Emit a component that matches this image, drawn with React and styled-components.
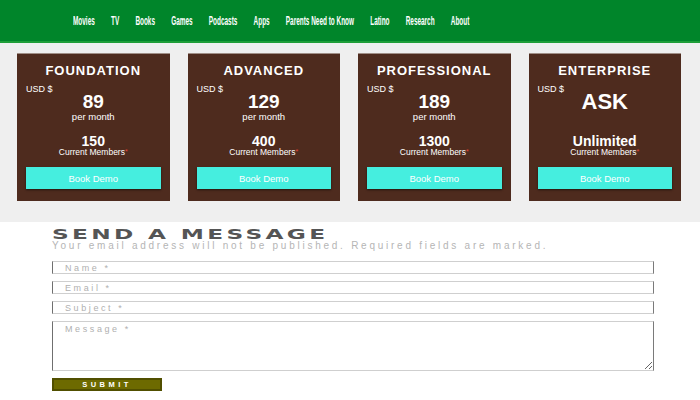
import React from "react";
import styled, { createGlobalStyle } from "styled-components";

const Global = createGlobalStyle`
  html, body { margin: 0; padding: 0; background: #ffffff; }
  body { font-family: "Liberation Sans", Arial, sans-serif; width: 700px; height: 400px; overflow: hidden; }
  #root { width: 700px; overflow: hidden; }
  * { box-sizing: border-box; }
`;

const Header = styled.header`
  height: 43px;
  background: #00852a;
  border-bottom: 2px solid #1e9e38;
  display: flex;
  align-items: center;
  padding-left: 73px;
  overflow: hidden;
`;

const NavList = styled.nav`
  display: flex;
  align-items: center;
  gap: 34px;
  transform: scaleX(0.476);
  transform-origin: left center;
  white-space: nowrap;
  flex-shrink: 0;
`;

const NavLink = styled.a`
  color: #ffffff;
  font-family: "Liberation Sans", Arial, sans-serif;
  font-size: 13.5px;
  font-weight: 700;
  text-decoration: none;
  line-height: 16px;
  margin-top: 1px;
`;

const Plans = styled.section`
  background: #efefef;
  padding: 10px 19px 21px 17px;
  display: grid;
  grid-template-columns: repeat(4, 1fr);
  gap: 18px;
`;

const Card = styled.div`
  background: #4e2b1e;
  border-top: 1px solid #a08e86;
  padding: 9px 9px 12px;
  color: #ffffff;
  display: flex;
  flex-direction: column;
  text-align: center;
`;

const PlanTitle = styled.h3`
  margin: 0;
  font-size: 13px;
  line-height: 15px;
  font-weight: 700;
  letter-spacing: 1px;
`;

const Currency = styled.div`
  margin-top: 7px;
  font-size: 9px;
  line-height: 8px;
  height: 8px;
  text-align: left;
`;

const Price = styled.div`
  font-size: ${(p) => (p.$word ? "22px" : "19px")};
  line-height: 18px;
  height: 18px;
  font-weight: 700;
`;

const Period = styled.div`
  font-size: 9.5px;
  line-height: 11px;
  height: 11px;
`;

const Members = styled.div`
  margin-top: 13px;
  font-size: 14px;
  line-height: 12px;
  height: 12px;
  font-weight: 700;
`;

const MembersLabel = styled.div`
  font-size: 8.5px;
  line-height: 10px;
  height: 10px;
`;

const Star = styled.span`
  color: #e2463c;
  font-size: 7px;
  vertical-align: top;
`;

const DemoButton = styled.button`
  margin-top: 10px;
  height: 22px;
  border: none;
  background: #45eedf;
  color: #ffffff;
  font-family: "Liberation Sans", Arial, sans-serif;
  font-size: 9.5px;
  box-shadow: 0 1px 2px rgba(0, 0, 0, 0.55);
  cursor: pointer;
`;

const Form = styled.form`
  padding: 6px 46px 0 52px;
  display: flex;
  flex-direction: column;
  overflow: hidden;
`;

const FormTitle = styled.h2`
  margin: 0;
  font-family: "DejaVu Sans", sans-serif;
  font-size: 14px;
  line-height: 13px;
  font-weight: 700;
  color: #555555;
  letter-spacing: 2px;
  transform: scaleX(1.66);
  transform-origin: left center;
  white-space: nowrap;
`;

const FormNote = styled.p`
  margin: 0;
  font-size: 10px;
  line-height: 10px;
  color: #b5b5b5;
  letter-spacing: 2.75px;
  white-space: nowrap;
`;

const Fields = styled.div`
  margin-top: 10px;
  display: flex;
  flex-direction: column;
  gap: 7px;
`;

const fieldStyle = `
  width: 100%;
  border: 1px solid #cfcfcf;
  border-left-color: #6f6f6f;
  border-right-color: #7a7a7a;
  background: #ffffff;
  font-family: "Liberation Sans", Arial, sans-serif;
  font-size: 9px;
  letter-spacing: 2.6px;
  color: #555;
  padding: 0 0 0 12px;
  outline: none;
  margin: 0;
  &::placeholder { color: #b0b0b0; }
`;

const Field = styled.input`
  ${fieldStyle}
  height: 13px;
`;

const MessageBox = styled.textarea`
  ${fieldStyle}
  display: block;
  height: 50px;
  padding-top: 2px;
  line-height: 11px;
  resize: vertical;
`;

const Submit = styled.button`
  margin-top: 7px;
  width: 110px;
  height: 13px;
  padding: 0;
  background: #6d6a00;
  border: 2px solid #514f00;
  color: #ffffff;
  font-family: "Liberation Sans", Arial, sans-serif;
  font-size: 7.5px;
  font-weight: 700;
  letter-spacing: 3.5px;
  line-height: 9px;
  cursor: pointer;
`;

const navItems = ["Movies", "TV", "Books", "Games", "Podcasts", "Apps", "Parents Need to Know", "Latino", "Research", "About"];

const plans = [
  { name: "FOUNDATION", price: "89", period: "per month", members: "150" },
  { name: "ADVANCED", price: "129", period: "per month", members: "400" },
  { name: "PROFESSIONAL", price: "189", period: "per month", members: "1300" },
  { name: "ENTERPRISE", price: "ASK", period: "", members: "Unlimited", word: true },
];

export default function App() {
  return (
    <>
      <Global />
      <Header>
        <NavList>
          {navItems.map((n) => (
            <NavLink key={n} href="#">{n}</NavLink>
          ))}
        </NavList>
      </Header>
      <Plans>
        {plans.map((p) => (
          <Card key={p.name}>
            <PlanTitle>{p.name}</PlanTitle>
            <Currency>USD $</Currency>
            <Price $word={p.word}>{p.price}</Price>
            <Period>{p.period}</Period>
            <Members>{p.members}</Members>
            <MembersLabel>
              Current Members<Star>*</Star>
            </MembersLabel>
            <DemoButton type="button">Book Demo</DemoButton>
          </Card>
        ))}
      </Plans>
      <Form onSubmit={(e) => e.preventDefault()}>
        <FormTitle>SEND A MESSAGE</FormTitle>
        <FormNote>Your email address will not be published. Required fields are marked.</FormNote>
        <Fields>
          <Field placeholder="Name *" />
          <Field placeholder="Email *" />
          <Field placeholder="Subject *" />
          <MessageBox placeholder="Message *" />
        </Fields>
        <div>
          <Submit type="submit">SUBMIT</Submit>
        </div>
      </Form>
    </>
  );
}
